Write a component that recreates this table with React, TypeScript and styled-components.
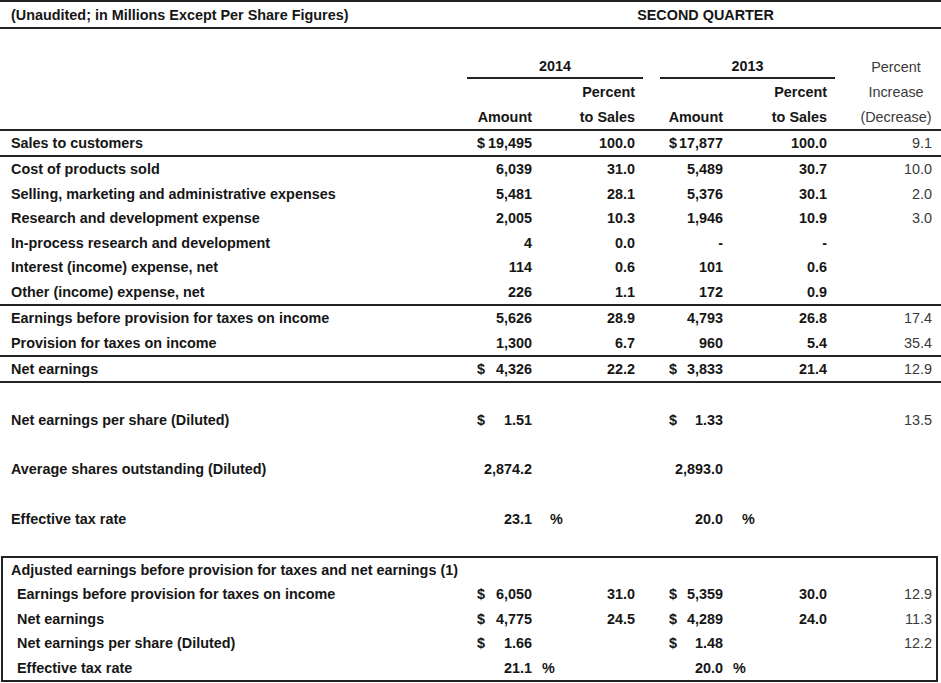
import React from "react";
import styled, { createGlobalStyle } from "styled-components";

const Global = createGlobalStyle`
  html, body { margin: 0; padding: 0; background: #fff; overflow: hidden; }
  body { font-family: "Liberation Sans", Arial, sans-serif; color: #161616; }
`;

const Page = styled.div`
  width: 941px;
  border-top: 2px solid #222;
  font-size: 14.4px;
  font-weight: bold;
`;

const Row = styled.div<{ $h: number; $line?: boolean; $inset?: boolean }>`
  display: grid;
  grid-template-columns: ${(p) => (p.$inset ? "467px" : "470px")} 67px 103px 88px 104px 1fr;
  height: ${(p) => p.$h}px;
  align-items: center;
  box-sizing: content-box;
  border-bottom: ${(p) => (p.$line ? "2px solid #222" : "none")};
  white-space: nowrap;
`;

const HeaderBlock = styled.div`
  padding-top: 25px;
  border-bottom: 2px solid #222;
`;

const Spaced = styled.div`
  padding-top: 12px;
`;

const Label = styled.div<{ $pad?: number }>`
  padding-left: ${(p) => p.$pad ?? 11}px;
`;

const Title = styled.div<{ $pad?: number }>`
  padding-left: ${(p) => p.$pad ?? 11}px;
`;

const Span = styled.div<{ $from: number; $to: number }>`
  grid-column: ${(p) => p.$from} / ${(p) => p.$to};
  text-align: center;
`;

const YearHead = styled.div<{ $from: number; $to: number; $ml: number; $mr: number }>`
  grid-column: ${(p) => p.$from} / ${(p) => p.$to};
  align-self: stretch;
  display: flex;
  align-items: center;
  justify-content: center;
  border-bottom: 2px solid #222;
  margin-left: ${(p) => p.$ml}px;
  margin-right: ${(p) => p.$mr}px;
`;

const Amt = styled.div<{ $lead: number }>`
  display: flex;
  justify-content: space-between;
  gap: 2px;
  padding-left: ${(p) => p.$lead}px;
  padding-right: 5px;
`;

const Right = styled.div`
  text-align: right;
  padding-right: 5px;
`;

const PctSign = styled.div<{ $pad: number }>`
  padding-left: ${(p) => p.$pad}px;
`;

const Inc = styled.div<{ $pr?: number }>`
  text-align: right;
  padding-right: ${(p) => p.$pr ?? 9}px;
  font-weight: normal;
  color: #3a3a3a;
`;

const IncHead = styled.div`
  text-align: center;
  padding: 0 9px 0 28px;
  font-weight: normal;
  color: #3a3a3a;
`;

const Empty = styled.div``;

const Box = styled.div`
  margin: 12px 0 0 1px;
  width: 933px;
  border: 2px solid #222;
`;

type Line = {
  label: string;
  a1: string;
  d1?: boolean;
  p1?: string;
  a2: string;
  d2?: boolean;
  p2?: string;
  inc?: string;
};

const LEAD1 = 7;
const LEAD2 = 29;

const Amount: React.FC<{ v: string; dollar?: boolean; lead: number }> = ({ v, dollar, lead }) => (
  <Amt $lead={lead}>
    <span>{dollar ? "$" : ""}</span>
    <span>{v}</span>
  </Amt>
);

const DataRow: React.FC<{ d: Line; h: number; line?: boolean }> = ({ d, h, line }) => (
  <Row $h={h} $line={line}>
    <Label>{d.label}</Label>
    <Amount v={d.a1} dollar={d.d1} lead={LEAD1} />
    <Right>{d.p1 ?? ""}</Right>
    <Amount v={d.a2} dollar={d.d2} lead={LEAD2} />
    <Right>{d.p2 ?? ""}</Right>
    <Inc>{d.inc ?? ""}</Inc>
  </Row>
);

const group1: Line[] = [
  { label: "Cost of products sold", a1: "6,039", p1: "31.0", a2: "5,489", p2: "30.7", inc: "10.0" },
  { label: "Selling, marketing and administrative expenses", a1: "5,481", p1: "28.1", a2: "5,376", p2: "30.1", inc: "2.0" },
  { label: "Research and development expense", a1: "2,005", p1: "10.3", a2: "1,946", p2: "10.9", inc: "3.0" },
  { label: "In-process research and development", a1: "4", p1: "0.0", a2: "-", p2: "-" },
  { label: "Interest (income) expense, net", a1: "114", p1: "0.6", a2: "101", p2: "0.6" },
  { label: "Other (income) expense, net", a1: "226", p1: "1.1", a2: "172", p2: "0.9" },
];

const group2: Line[] = [
  { label: "Earnings before provision for taxes on income", a1: "5,626", p1: "28.9", a2: "4,793", p2: "26.8", inc: "17.4" },
  { label: "Provision for taxes on income", a1: "1,300", p1: "6.7", a2: "960", p2: "5.4", inc: "35.4" },
];

const adjusted: Line[] = [
  { label: "Earnings before provision for taxes on income", a1: "6,050", d1: true, p1: "31.0", a2: "5,359", d2: true, p2: "30.0", inc: "12.9" },
  { label: "Net earnings", a1: "4,775", d1: true, p1: "24.5", a2: "4,289", d2: true, p2: "24.0", inc: "11.3" },
  { label: "Net earnings per share (Diluted)", a1: "1.66", d1: true, a2: "1.48", d2: true, inc: "12.2" },
];

const BoxRow: React.FC<{ d: Line }> = ({ d }) => (
  <Row $h={24.5} $inset>
    <Label $pad={14}>{d.label}</Label>
    <Amount v={d.a1} dollar={d.d1} lead={LEAD1} />
    <Right>{d.p1 ?? ""}</Right>
    <Amount v={d.a2} dollar={d.d2} lead={LEAD2} />
    <Right>{d.p2 ?? ""}</Right>
    <Inc $pr={4}>{d.inc ?? ""}</Inc>
  </Row>
);

export default function App() {
  return (
    <>
      <Global />
      <Page>
        <Row $h={25} $line>
          <Title>(Unaudited; in Millions Except Per Share Figures)</Title>
          <Span $from={2} $to={7}>SECOND QUARTER</Span>
        </Row>

        <HeaderBlock>
          <Row $h={25}>
            <Empty />
            <YearHead $from={2} $to={4} $ml={-3} $mr={-3}>2014</YearHead>
            <YearHead $from={4} $to={6} $ml={20} $mr={-3}>2013</YearHead>
            <IncHead>Percent</IncHead>
          </Row>
          <Row $h={25}>
            <Empty />
            <Empty />
            <Right>Percent</Right>
            <Empty />
            <Right>Percent</Right>
            <IncHead>Increase</IncHead>
          </Row>
          <Row $h={25}>
            <Empty />
            <Right>Amount</Right>
            <Right>to Sales</Right>
            <Right>Amount</Right>
            <Right>to Sales</Right>
            <IncHead>(Decrease)</IncHead>
          </Row>
        </HeaderBlock>

        <DataRow
          h={24}
          line
          d={{ label: "Sales to customers", a1: "19,495", d1: true, p1: "100.0", a2: "17,877", d2: true, p2: "100.0", inc: "9.1" }}
        />
        {group1.map((d, i) => (
          <DataRow key={d.label} d={d} h={24.5} line={i === group1.length - 1} />
        ))}
        {group2.map((d, i) => (
          <DataRow key={d.label} d={d} h={24.5} line={i === group2.length - 1} />
        ))}
        <DataRow
          h={24}
          line
          d={{ label: "Net earnings", a1: "4,326", d1: true, p1: "22.2", a2: "3,833", d2: true, p2: "21.4", inc: "12.9" }}
        />

        <Spaced>
          <DataRow
            h={49.5}
            d={{ label: "Net earnings per share (Diluted)", a1: "1.51", d1: true, a2: "1.33", d2: true, inc: "13.5" }}
          />
          <DataRow h={49.5} d={{ label: "Average shares outstanding (Diluted)", a1: "2,874.2", a2: "2,893.0" }} />
          <Row $h={49.5}>
            <Label>Effective tax rate</Label>
            <Amount v="23.1" lead={LEAD1} />
            <PctSign $pad={13}>%</PctSign>
            <Amount v="20.0" lead={LEAD2} />
            <PctSign $pad={14}>%</PctSign>
            <Empty />
          </Row>
        </Spaced>

        <Box>
          <Row $h={24.5} $inset>
            <Label $pad={8}>Adjusted earnings before provision for taxes and net earnings (1)</Label>
          </Row>
          {adjusted.map((d) => (
            <BoxRow key={d.label} d={d} />
          ))}
          <Row $h={24.5} $inset>
            <Label $pad={14}>Effective tax rate</Label>
            <Amount v="21.1" lead={LEAD1} />
            <PctSign $pad={5}>%</PctSign>
            <Amount v="20.0" lead={LEAD2} />
            <PctSign $pad={5}>%</PctSign>
            <Empty />
          </Row>
        </Box>
      </Page>
    </>
  );
}
